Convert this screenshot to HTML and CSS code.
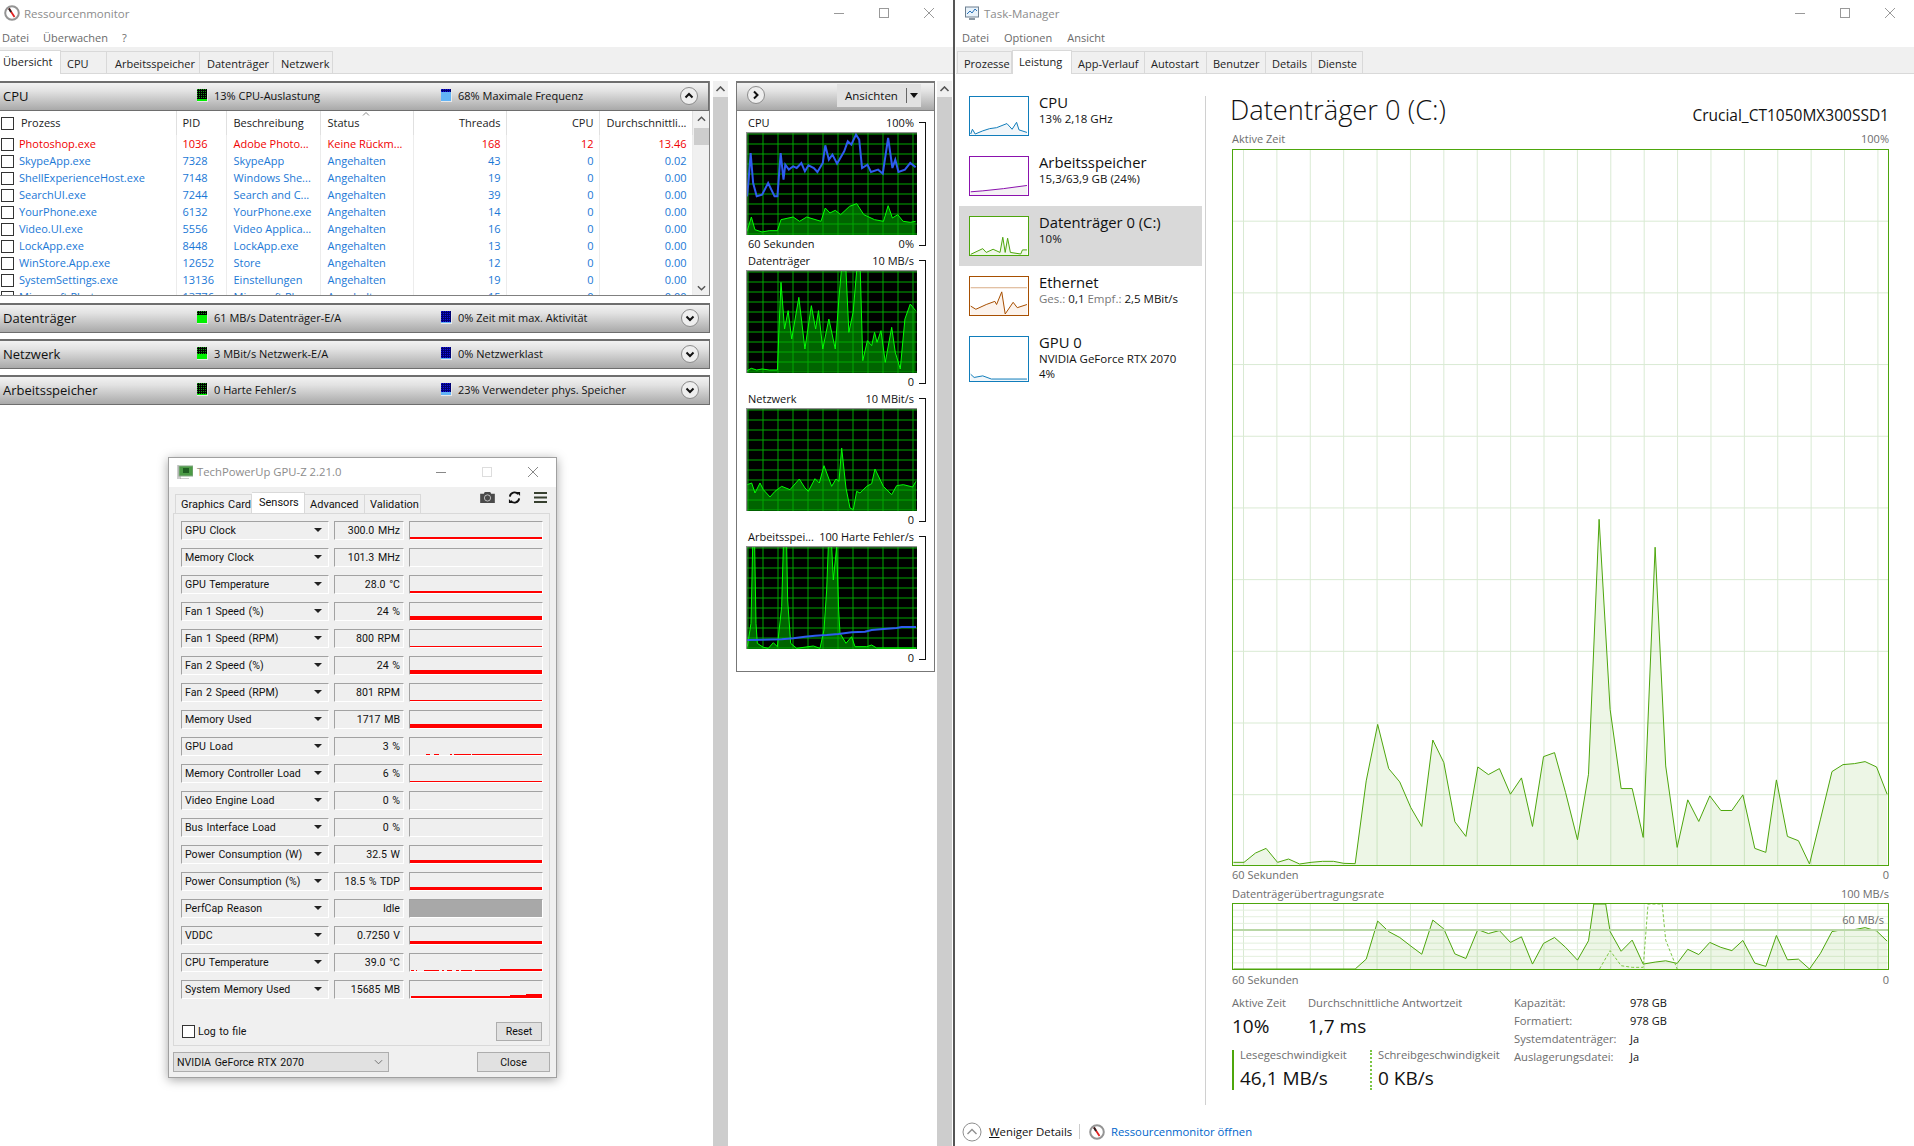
FILE: index.html
```html
<!DOCTYPE html>
<html lang="de">
<head>
    <meta charset="UTF-8">
    <title>Ressourcenmonitor und Task-Manager</title>
    <link rel="stylesheet" href="styles.css">
</head>
<body>

<!-- Ressourcenmonitor -->
<div class="resmon">
    <div class="title_bar">
        <svg class="title_icon" viewBox="0 0 16 16">
            <circle cx="8" cy="8" r="6.8" fill="#fff" stroke="#949494" stroke-width="2"/>
            <path d="M5 3.5 L10.5 12" stroke="#e02020" stroke-width="1.8"/>
            <path d="M5 3.5 L7 7" stroke="#222" stroke-width="1.8"/>
        </svg>
        <span class="title_text">Ressourcenmonitor</span>
        <div class="window_controls">
            <svg viewBox="0 0 12 12"><path d="M1 6.5 H11" stroke="#999"/></svg>
            <svg viewBox="0 0 12 12"><rect x="1.5" y="1.5" width="9" height="9" fill="none" stroke="#999"/></svg>
            <svg viewBox="0 0 12 12"><path d="M1 1 L11 11 M11 1 L1 11" stroke="#999"/></svg>
        </div>
    </div>
    <div class="menu_bar">
        <span>Datei</span><span>Überwachen</span><span>?</span>
    </div>
    <div class="tab_strip">
        <span class="tab tab_active rm_tab1">Übersicht</span>
        <span class="tab rm_tab2">CPU</span>
        <span class="tab rm_tab3">Arbeitsspeicher</span>
        <span class="tab rm_tab4">Datenträger</span>
        <span class="tab rm_tab5">Netzwerk</span>
    </div>

    <div class="rm_body">
        <div class="rm_sections">
            <div class="section">
                <div class="section_head">
                    <span class="section_name">CPU</span>
                    <span class="section_stat"><span class="meter meter_green"><i style="height:2px"></i></span>13% CPU-Auslastung</span>
                    <span class="section_stat stat_second"><span class="meter meter_blue"><i style="height:9px"></i></span>68% Maximale Frequenz</span>
                    <svg class="round_btn" viewBox="0 0 20 20"><circle cx="10" cy="10" r="8.5" fill="#eee" stroke="#8c8c8c"/><path d="M6.5 11.5 L10 8 L13.5 11.5" fill="none" stroke="#111" stroke-width="2"/></svg>
                </div>
                <div class="process_wrap">
                    <table class="process_table">
                        <colgroup>
                            <col class="c_name"><col class="c_pid"><col class="c_desc"><col class="c_num"><col class="c_num"><col class="c_num"><col class="c_num">
                        </colgroup>
                        <tr class="process_head">
                            <th><span class="check"></span>Prozess</th><th>PID</th><th class="wide_pad">Beschreibung</th>
                            <th class="sort_col wide_pad">Status<svg class="sort_arrow" viewBox="0 0 8 4"><path d="M1 3.5 L4 .5 L7 3.5" fill="none" stroke="#888"/></svg></th>
                            <th class="num">Threads</th><th class="num">CPU</th><th class="num">Durchschnittli...</th>
                        </tr>
                        <tr class="row_red"><td><span class="check"></span>Photoshop.exe</td><td>1036</td><td class="wide_pad">Adobe Photo...</td><td class="wide_pad">Keine Rückm...</td><td class="num">168</td><td class="num">12</td><td class="num">13.46</td></tr>
                        <tr><td><span class="check"></span>SkypeApp.exe</td><td>7328</td><td class="wide_pad">SkypeApp</td><td class="wide_pad">Angehalten</td><td class="num">43</td><td class="num">0</td><td class="num">0.02</td></tr>
                        <tr><td><span class="check"></span>ShellExperienceHost.exe</td><td>7148</td><td class="wide_pad">Windows She...</td><td class="wide_pad">Angehalten</td><td class="num">19</td><td class="num">0</td><td class="num">0.00</td></tr>
                        <tr><td><span class="check"></span>SearchUI.exe</td><td>7244</td><td class="wide_pad">Search and C...</td><td class="wide_pad">Angehalten</td><td class="num">39</td><td class="num">0</td><td class="num">0.00</td></tr>
                        <tr><td><span class="check"></span>YourPhone.exe</td><td>6132</td><td class="wide_pad">YourPhone.exe</td><td class="wide_pad">Angehalten</td><td class="num">14</td><td class="num">0</td><td class="num">0.00</td></tr>
                        <tr><td><span class="check"></span>Video.UI.exe</td><td>5556</td><td class="wide_pad">Video Applica...</td><td class="wide_pad">Angehalten</td><td class="num">16</td><td class="num">0</td><td class="num">0.00</td></tr>
                        <tr><td><span class="check"></span>LockApp.exe</td><td>8448</td><td class="wide_pad">LockApp.exe</td><td class="wide_pad">Angehalten</td><td class="num">13</td><td class="num">0</td><td class="num">0.00</td></tr>
                        <tr><td><span class="check"></span>WinStore.App.exe</td><td>12652</td><td class="wide_pad">Store</td><td class="wide_pad">Angehalten</td><td class="num">12</td><td class="num">0</td><td class="num">0.00</td></tr>
                        <tr><td><span class="check"></span>SystemSettings.exe</td><td>13136</td><td class="wide_pad">Einstellungen</td><td class="wide_pad">Angehalten</td><td class="num">19</td><td class="num">0</td><td class="num">0.00</td></tr>
                        <tr><td><span class="check"></span>Microsoft.Photos.exe</td><td>13776</td><td class="wide_pad">Microsoft Ph...</td><td class="wide_pad">Angehalten</td><td class="num">15</td><td class="num">0</td><td class="num">0.00</td></tr>
                    </table>
                    <div class="inner_scroll">
                        <svg viewBox="0 0 10 6"><path d="M1 5 L5 1 L9 5" fill="none" stroke="#555" stroke-width="1.6"/></svg>
                        <div class="inner_thumb"></div>
                        <svg class="scroll_down" viewBox="0 0 10 6"><path d="M1 1 L5 5 L9 1" fill="none" stroke="#555" stroke-width="1.6"/></svg>
                    </div>
                </div>
            </div>

            <div class="section_head section_closed">
                <span class="section_name">Datenträger</span>
                <span class="section_stat"><span class="meter meter_green"><i style="height:8px"></i></span>61 MB/s Datenträger-E/A</span>
                <span class="section_stat stat_second"><span class="meter meter_blue"><i style="height:1px"></i></span>0% Zeit mit max. Aktivität</span>
                <svg class="round_btn" viewBox="0 0 20 20"><circle cx="10" cy="10" r="8.5" fill="#eee" stroke="#8c8c8c"/><path d="M6.5 8.5 L10 12 L13.5 8.5" fill="none" stroke="#111" stroke-width="2"/></svg>
            </div>
            <div class="section_head section_closed">
                <span class="section_name">Netzwerk</span>
                <span class="section_stat"><span class="meter meter_green"><i style="height:5px"></i></span>3 MBit/s Netzwerk-E/A</span>
                <span class="section_stat stat_second"><span class="meter meter_blue"><i style="height:1px"></i></span>0% Netzwerklast</span>
                <svg class="round_btn" viewBox="0 0 20 20"><circle cx="10" cy="10" r="8.5" fill="#eee" stroke="#8c8c8c"/><path d="M6.5 8.5 L10 12 L13.5 8.5" fill="none" stroke="#111" stroke-width="2"/></svg>
            </div>
            <div class="section_head section_closed">
                <span class="section_name">Arbeitsspeicher</span>
                <span class="section_stat"><span class="meter meter_green"><i style="height:1px"></i></span>0 Harte Fehler/s</span>
                <span class="section_stat stat_second"><span class="meter meter_blue"><i style="height:3px"></i></span>23% Verwendeter phys. Speicher</span>
                <svg class="round_btn" viewBox="0 0 20 20"><circle cx="10" cy="10" r="8.5" fill="#eee" stroke="#8c8c8c"/><path d="M6.5 8.5 L10 12 L13.5 8.5" fill="none" stroke="#111" stroke-width="2"/></svg>
            </div>
        </div>

        <div class="outer_scroll scroll_one">
            <svg viewBox="0 0 10 6"><path d="M1 5 L5 1 L9 5" fill="none" stroke="#555" stroke-width="1.6"/></svg>
        </div>

        <div class="graph_panel">
            <div class="graph_head">
                <svg class="round_btn" viewBox="0 0 20 20"><circle cx="10" cy="10" r="8.5" fill="#eee" stroke="#8c8c8c"/><path d="M8 6.5 L11.5 10 L8 13.5" fill="none" stroke="#111" stroke-width="2"/></svg>
                <div class="views_btn"><span class="views_label">Ansichten</span><span class="views_arrow"></span></div>
            </div>
            <div class="graph_list">
                <div class="graph_block">
                    <div class="graph_labels"><span>CPU</span><span>100%</span></div>
                    <svg class="graph" viewBox="0 0 171 103">
                        <defs>
                            <pattern id="rm_grid" x="1.5" y="1.5" width="15" height="10" patternUnits="userSpaceOnUse">
                                <rect width="1" height="10" fill="#00a800"/><rect width="15" height="1" fill="#00a800"/>
                            </pattern>
                        </defs>
                        <rect width="171" height="103" fill="#000"/>
                        <g transform="scale(.3571 .3333) translate(-130 -397)">
                            <polygon class="fill_green" points="133,705 133,695 145,652 155,690 175,697 195,693 218,693 228,660 262,652 280,665 300,652 340,665 352,625 365,640 380,632 395,645 420,620 440,612 460,645 490,660 515,665 528,618 540,655 555,645 570,665 590,668 605,665 605,705"/>
                        </g>
                        <rect width="171" height="103" fill="url(#rm_grid)"/>
                        <g transform="scale(.3571 .3333) translate(-130 -397)">
                            <polyline class="line_green" points="133,695 145,652 155,690 175,697 195,693 218,693 228,660 262,652 280,665 300,652 340,665 352,625 365,640 380,632 395,645 420,620 440,612 460,645 490,660 515,665 528,618 540,655 555,645 570,665 590,668 605,665"/>
                            <polyline class="line_blue" points="133,590 137,545 143,460 150,550 160,590 175,585 192,550 210,590 218,590 227,460 235,540 240,495 250,510 262,500 272,505 285,490 295,515 305,497 320,505 330,517 345,490 352,437 362,480 372,465 385,492 405,455 415,425 425,435 438,405 447,420 455,505 470,495 480,517 500,510 513,522 528,415 540,505 548,480 557,517 575,510 590,490 605,503"/>
                        </g>
                        <path class="graph_edge" d="M.5 103 V.5 H171"/>
                    </svg>
                    <div class="graph_labels"><span>60 Sekunden</span><span>0%</span></div>
                </div>
                <div class="graph_block">
                    <div class="graph_labels"><span>Datenträger</span><span>10 MB/s</span></div>
                    <svg class="graph" viewBox="0 0 171 103">
                        <rect width="171" height="103" fill="#000"/>
                        <g transform="scale(.3571 .3333) translate(-130 -813)">
                            <polygon class="fill_green" points="133,1118 133,1115 145,1108 160,1113 175,1110 195,1113 218,1113 222,1000 228,850 238,990 248,935 258,1020 278,895 295,1050 313,920 325,990 333,935 345,1050 362,960 380,1050 390,900 397,815 410,815 418,1000 430,940 440,815 450,815 457,1085 470,1025 482,1040 490,1000 497,1030 508,995 520,1090 538,985 548,1060 562,1110 575,960 590,915 605,935 605,1118"/>
                        </g>
                        <rect width="171" height="103" fill="url(#rm_grid)"/>
                        <g transform="scale(.3571 .3333) translate(-130 -813)">
                            <polyline class="line_green" points="133,1115 145,1108 160,1113 175,1110 195,1113 218,1113 222,1000 228,850 238,990 248,935 258,1020 278,895 295,1050 313,920 325,990 333,935 345,1050 362,960 380,1050 390,900 397,815 410,815 418,1000 430,940 440,815 450,815 457,1085 470,1025 482,1040 490,1000 497,1030 508,995 520,1090 538,985 548,1060 562,1110 575,960 590,915 605,935"/>
                        </g>
                        <path class="graph_edge" d="M.5 103 V.5 H171"/>
                    </svg>
                    <div class="graph_labels graph_zero"><span>0</span></div>
                </div>
                <div class="graph_block">
                    <div class="graph_labels"><span>Netzwerk</span><span>10 MBit/s</span></div>
                    <svg class="graph" viewBox="0 0 171 103">
                        <rect width="171" height="103" fill="#000"/>
                        <g transform="scale(.3333) translate(-78 -85)">
                            <polygon class="fill_green" points="82,392 82,315 95,310 105,340 120,310 130,330 150,352 165,335 185,320 210,330 238,298 255,325 265,335 285,297 298,310 312,258 335,320 348,298 357,305 365,205 378,325 390,385 400,390 410,335 420,340 440,320 455,312 465,268 490,320 515,345 530,318 550,315 578,322 588,305 588,392"/>
                        </g>
                        <rect width="171" height="103" fill="url(#rm_grid)"/>
                        <g transform="scale(.3333) translate(-78 -85)">
                            <polyline class="line_green" points="82,315 95,310 105,340 120,310 130,330 150,352 165,335 185,320 210,330 238,298 255,325 265,335 285,297 298,310 312,258 335,320 348,298 357,305 365,205 378,325 390,385 400,390 410,335 420,340 440,320 455,312 465,268 490,320 515,345 530,318 550,315 578,322 588,305"/>
                        </g>
                        <path class="graph_edge" d="M.5 103 V.5 H171"/>
                    </svg>
                    <div class="graph_labels graph_zero"><span>0</span></div>
                </div>
                <div class="graph_block">
                    <div class="graph_labels"><span>Arbeitsspei...</span><span>100 Harte Fehler/s</span></div>
                    <svg class="graph" viewBox="0 0 171 103">
                        <rect width="171" height="103" fill="#000"/>
                        <g transform="scale(.3333) translate(-78 -498)">
                            <polygon class="fill_green" points="82,806 82,800 93,730 98,500 104,500 108,730 112,790 130,802 145,805 160,788 172,800 185,680 190,500 200,500 203,660 212,790 230,805 280,798 300,805 312,750 320,630 325,500 335,500 340,600 350,500 356,690 360,760 378,790 395,770 405,800 440,800 455,795 470,804 588,804 588,806"/>
                        </g>
                        <rect width="171" height="103" fill="url(#rm_grid)"/>
                        <g transform="scale(.3333) translate(-78 -498)">
                            <polyline class="line_green" points="82,800 93,730 98,500 104,500 108,730 112,790 130,802 145,805 160,788 172,800 185,680 190,500 200,500 203,660 212,790 230,805 280,798 300,805 312,750 320,630 325,500 335,500 340,600 350,500 356,690 360,760 378,790 395,770 405,800 440,800 455,795 470,804 588,804"/>
                            <polyline class="line_blue" points="82,780 185,778 220,775 255,770 285,767 320,765 355,762 395,757 435,755 455,750 490,747 530,744 545,741 588,741"/>
                        </g>
                        <path class="graph_edge" d="M.5 103 V.5 H171"/>
                    </svg>
                    <div class="graph_labels graph_zero"><span>0</span></div>
                </div>
            </div>
        </div>

        <div class="outer_scroll scroll_two">
            <svg viewBox="0 0 10 6"><path d="M1 5 L5 1 L9 5" fill="none" stroke="#555" stroke-width="1.6"/></svg>
        </div>
    </div>
</div>

<div class="window_gap"></div>

<!-- Task-Manager -->
<div class="taskmgr">
    <div class="title_bar">
        <svg class="title_icon tm_icon" viewBox="0 0 16 16">
            <rect x="1.5" y="2" width="13" height="10" fill="#e8f2fa" stroke="#6d7f8f"/>
            <path d="M3 9 L6 6 L8 8 L11 4 L13 6" fill="none" stroke="#2a72b8"/>
            <rect x="5" y="13" width="6" height="2" fill="#8b98a3"/>
        </svg>
        <span class="title_text">Task-Manager</span>
        <div class="window_controls">
            <svg viewBox="0 0 12 12"><path d="M1 6.5 H11" stroke="#999"/></svg>
            <svg viewBox="0 0 12 12"><rect x="1.5" y="1.5" width="9" height="9" fill="none" stroke="#999"/></svg>
            <svg viewBox="0 0 12 12"><path d="M1 1 L11 11 M11 1 L1 11" stroke="#999"/></svg>
        </div>
    </div>
    <div class="menu_bar tm_menu">
        <span>Datei</span><span>Optionen</span><span>Ansicht</span>
    </div>
    <div class="tab_strip tm_strip">
        <span class="tab tm_tab1">Prozesse</span>
        <span class="tab tab_active tm_tab2">Leistung</span>
        <span class="tab tm_tab3">App-Verlauf</span>
        <span class="tab tm_tab4">Autostart</span>
        <span class="tab tm_tab5">Benutzer</span>
        <span class="tab tm_tab6">Details</span>
        <span class="tab tm_tab7">Dienste</span>
    </div>

    <div class="tm_body">
        <div class="perf_list">
            <div class="perf_item">
                <svg class="thumb thumb_cpu" viewBox="0 0 60 40" preserveAspectRatio="none">
                    <g transform="scale(.357 .333) translate(-753 -288)">
                        <polygon fill="#f1f6fa" points="755,408 755,405 760,390 768,405 790,395 810,388 830,385 860,372 875,390 888,368 895,392 918,400 918,408"/>
                        <polyline class="thumb_line" points="755,405 760,390 768,405 790,395 810,388 830,385 860,372 875,390 888,368 895,392 918,400"/>
                    </g>
                </svg>
                <div class="perf_text"><div class="perf_name">CPU</div><div class="perf_sub">13% 2,18 GHz</div></div>
            </div>
            <div class="perf_item">
                <svg class="thumb thumb_mem" viewBox="0 0 60 40" preserveAspectRatio="none">
                    <g transform="scale(.357 .333) translate(-753 -468)">
                        <polygon fill="#f4f2f4" points="755,588 755,578 790,575 850,568 918,558 918,588"/>
                        <polyline class="thumb_line" points="755,578 790,575 850,568 918,558"/>
                    </g>
                </svg>
                <div class="perf_text"><div class="perf_name">Arbeitsspeicher</div><div class="perf_sub">15,3/63,9 GB (24%)</div></div>
            </div>
            <div class="perf_item perf_selected">
                <svg class="thumb thumb_disk" viewBox="0 0 60 40" preserveAspectRatio="none">
                    <rect width="60" height="40" fill="#fff"/>
                    <g transform="scale(.357 .333) translate(-753 -648)">
                        <polygon fill="#eff7e9" points="755,768 755,766 790,748 800,760 820,750 840,760 848,712 855,760 862,715 870,760 900,765 905,752 918,752 918,768"/>
                        <polyline class="thumb_line" points="755,766 790,748 800,760 820,750 840,760 848,712 855,760 862,715 870,760 900,765 905,752 918,752"/>
                    </g>
                </svg>
                <div class="perf_text"><div class="perf_name">Datenträger 0 (C:)</div><div class="perf_sub">10%</div></div>
            </div>
            <div class="perf_item">
                <svg class="thumb thumb_eth" viewBox="0 0 60 40" preserveAspectRatio="none">
                    <g transform="scale(.357 .333) translate(-753 -828)">
                        <polygon fill="#fcf3ec" points="755,948 755,920 770,930 800,915 825,905 830,915 845,875 855,945 878,908 890,925 918,915 918,948"/>
                        <path d="M755 862 H918" stroke="#d9ad86" vector-effect="non-scaling-stroke" fill="none"/>
                        <polyline class="thumb_line" points="755,920 770,930 800,915 825,905 830,915 845,875 855,945 878,908 890,925 918,915"/>
                    </g>
                </svg>
                <div class="perf_text"><div class="perf_name">Ethernet</div><div class="perf_sub"><span class="perf_dim">Ges.:</span> 0,1 <span class="perf_dim">Empf.:</span> 2,5 MBit/s</div></div>
            </div>
            <div class="perf_item">
                <svg class="thumb thumb_cpu thumb_tall" viewBox="0 0 60 46" preserveAspectRatio="none">
                    <g transform="scale(.357 .333) translate(-753 -1008)">
                        <polygon fill="#f1f6fa" points="755,1146 755,1125 765,1135 790,1130 815,1140 918,1140 918,1146"/>
                        <polyline class="thumb_line" points="755,1125 765,1135 790,1130 815,1140 918,1140"/>
                    </g>
                </svg>
                <div class="perf_text"><div class="perf_name">GPU 0</div><div class="perf_sub">NVIDIA GeForce RTX 2070</div><div class="perf_sub perf_sub2">4%</div></div>
            </div>
        </div>
        <div class="side_rule"></div>
        <div class="perf_main">
            <div class="perf_title_row">
                <span class="perf_title">Datenträger 0 (C:)</span>
                <span class="perf_model">Crucial_CT1050MX300SSD1</span>
            </div>
            <div class="chart_label chart_label_top"><span>Aktive Zeit</span><span>100%</span></div>
            <div class="chart chart_big">
                <svg viewBox="27 -993 1485 2151" preserveAspectRatio="none">
                    <polygon class="chart_fill" points="28,1158 28,1150 52,1150 78,1122 102,1108 128,1150 153,1140 178,1155 204,1150 230,1147 255,1147 278,1153 304,1154 329,905 355,735 380,868 405,908 430,985 455,1042 480,782 505,850 530,1028 555,1072 582,863 606,886 631,868 656,945 681,896 706,1042 731,832 756,820 781,940 808,1082 833,885 857,118 882,690 907,928 932,928 957,1075 984,202 1008,860 1034,1105 1058,962 1083,1027 1108,950 1133,994 1158,994 1183,947 1210,1108 1235,1120 1259,902 1284,1072 1309,1085 1334,1155 1359,1020 1385,877 1410,856 1436,853 1460,847 1486,863 1510,945 1510,1158"/>
                    <polyline class="chart_line" points="28,1150 52,1150 78,1122 102,1108 128,1150 153,1140 178,1155 204,1150 230,1147 255,1147 278,1153 304,1154 329,905 355,735 380,868 405,908 430,985 455,1042 480,782 505,850 530,1028 555,1072 582,863 606,886 631,868 656,945 681,896 706,1042 731,832 756,820 781,940 808,1082 833,885 857,118 882,690 907,928 932,928 957,1075 984,202 1008,860 1034,1105 1058,962 1083,1027 1108,950 1133,994 1158,994 1183,947 1210,1108 1235,1120 1259,902 1284,1072 1309,1085 1334,1155 1359,1020 1385,877 1410,856 1436,853 1460,847 1486,863 1510,945"/>
                </svg>
            </div>
            <div class="chart_label chart_label_a"><span>60 Sekunden</span><span>0</span></div>
            <div class="chart_label chart_label_b"><span>Datenträgerübertragungsrate</span><span>100 MB/s</span></div>
            <div class="chart chart_small">
                <svg viewBox="27 130 1485 198" preserveAspectRatio="none">
                    <polygon class="chart_fill" points="304,328 329,298 355,182 380,214 405,232 430,258 455,283 480,179 505,206 530,282 555,296 582,208 606,220 631,211 656,247 681,230 706,313 731,250 756,232 781,262 808,301 833,242 845,130 872,130 882,214 907,274 932,240 957,313 984,307 1008,303 1034,311 1058,268 1083,284 1108,247 1133,262 1158,272 1183,241 1210,310 1235,320 1259,226 1284,300 1309,298 1334,328 1359,280 1385,214 1410,208 1436,208 1460,202 1486,212 1510,243 1510,328"/>
                    <polyline class="chart_line" points="28,328 304,328 329,298 355,182 380,214 405,232 430,258 455,283 480,179 505,206 530,282 555,296 582,208 606,220 631,211 656,247 681,230 706,313 731,250 756,232 781,262 808,301 833,242 845,130 872,130 882,214 907,274 932,240 957,313 984,307 1008,303 1034,311 1058,268 1083,284 1108,247 1133,262 1158,272 1183,241 1210,310 1235,320 1259,226 1284,300 1309,298 1334,328 1359,280 1385,214 1410,208 1436,208 1460,202 1486,212 1510,243"/>
                    <polyline class="chart_dash" points="858,328 882,272 907,318 932,323 957,323 968,130 1000,130 1008,240 1034,328"/>
                </svg>
                <span class="chart_mark">60 MB/s</span>
            </div>
            <div class="chart_label chart_label_c"><span>60 Sekunden</span><span>0</span></div>

            <div class="stats">
                <div class="stats_left">
                    <div class="stats_top">
                        <div class="stat_cell stat_active"><div class="stat_label">Aktive Zeit</div><div class="stat_value">10%</div></div>
                        <div class="stat_cell"><div class="stat_label">Durchschnittliche Antwortzeit</div><div class="stat_value">1,7 ms</div></div>
                    </div>
                    <div class="stats_bottom">
                        <div class="stat_cell stat_read"><div class="stat_label">Lesegeschwindigkeit</div><div class="stat_value">46,1 MB/s</div></div>
                        <div class="stat_cell stat_write"><div class="stat_label">Schreibgeschwindigkeit</div><div class="stat_value">0 KB/s</div></div>
                    </div>
                </div>
                <div class="stats_right">
                    <span class="stat_label">Kapazität:</span><span>978 GB</span>
                    <span class="stat_label">Formatiert:</span><span>978 GB</span>
                    <span class="stat_label">Systemdatenträger:</span><span>Ja</span>
                    <span class="stat_label">Auslagerungsdatei:</span><span>Ja</span>
                </div>
            </div>
        </div>
    </div>

    <div class="tm_footer">
        <svg class="footer_circle" viewBox="0 0 20 20"><circle cx="10" cy="10" r="9" fill="#fff" stroke="#8f8f8f"/><path d="M5.5 12 L10 7.5 L14.5 12" fill="none" stroke="#8f8f8f" stroke-width="1.4"/></svg>
        <span class="footer_details"><u>W</u>eniger Details</span>
        <span class="footer_rule"></span>
        <svg class="footer_icon" viewBox="0 0 16 16">
            <circle cx="8" cy="8" r="6.8" fill="#fff" stroke="#949494" stroke-width="2"/>
            <path d="M5 3.5 L10.5 12" stroke="#e02020" stroke-width="1.8"/>
            <path d="M5 3.5 L7 7" stroke="#222" stroke-width="1.8"/>
        </svg>
        <span class="footer_link">Ressourcenmonitor öffnen</span>
    </div>
</div>

<!-- GPU-Z liegt über dem Ressourcenmonitor -->
<div class="gpuz">
    <div class="gpuz_title">
        <svg class="gpuz_icon" viewBox="0 0 16 14">
            <rect x="2" y="1" width="14" height="10" fill="#4b9a45" stroke="#86a886"/>
            <rect x="6" y="3" width="6" height="5" fill="#1f5e22"/>
            <path d="M1 0 V14 M3 11 V14 H12" stroke="#9a9a9a" fill="none"/>
        </svg>
        <span class="title_text">TechPowerUp GPU-Z 2.21.0</span>
        <div class="window_controls gpuz_controls">
            <svg viewBox="0 0 12 12"><path d="M1 6.5 H11" stroke="#888"/></svg>
            <svg viewBox="0 0 12 12"><rect x="1.5" y="1.5" width="9" height="9" fill="none" stroke="#ddd"/></svg>
            <svg viewBox="0 0 12 12"><path d="M1 1 L11 11 M11 1 L1 11" stroke="#888"/></svg>
        </div>
    </div>
    <div class="gpuz_tabs">
        <span class="gtab gtab1">Graphics Card</span>
        <span class="gtab gtab_active gtab2">Sensors</span>
        <span class="gtab gtab3">Advanced</span>
        <span class="gtab gtab4">Validation</span>
        <div class="gpuz_tools">
            <svg class="tool_cam" viewBox="0 0 16 12"><path d="M0 2 H4 L5 0 H11 L12 2 H16 V12 H0 Z" fill="#4a4a4a"/><circle cx="8" cy="6.5" r="3.4" fill="#4a4a4a" stroke="#c8c8c8"/></svg>
            <svg class="tool_ref" viewBox="0 0 14 14"><path d="M2 6 A5 5 0 0 1 11 3.5 M12 8 A5 5 0 0 1 3 10.5" fill="none" stroke="#111" stroke-width="2"/><path d="M9 1 L13 1 L13 5.5 Z M5 13 L1 13 L1 8.5 Z" fill="#111"/></svg>
            <svg class="tool_menu" viewBox="0 0 13 11"><path d="M0 1 H13 M0 5.5 H13 M0 10 H13" stroke="#37402f" stroke-width="2"/></svg>
        </div>
    </div>
    <div class="gpuz_panel">
        <div class="sensor"><div class="sensor_name">GPU Clock<i></i></div><div class="sensor_value">300.0 MHz</div><div class="sensor_graph"><b style="height:2px"></b></div></div>
        <div class="sensor"><div class="sensor_name">Memory Clock<i></i></div><div class="sensor_value">101.3 MHz</div><div class="sensor_graph"></div></div>
        <div class="sensor"><div class="sensor_name">GPU Temperature<i></i></div><div class="sensor_value">28.0 °C</div><div class="sensor_graph"><b style="height:2px"></b></div></div>
        <div class="sensor"><div class="sensor_name">Fan 1 Speed (%)<i></i></div><div class="sensor_value">24 %</div><div class="sensor_graph"><b style="height:4px"></b></div></div>
        <div class="sensor"><div class="sensor_name">Fan 1 Speed (RPM)<i></i></div><div class="sensor_value">800 RPM</div><div class="sensor_graph"><b style="height:1px"></b></div></div>
        <div class="sensor"><div class="sensor_name">Fan 2 Speed (%)<i></i></div><div class="sensor_value">24 %</div><div class="sensor_graph"><b style="height:4px"></b></div></div>
        <div class="sensor"><div class="sensor_name">Fan 2 Speed (RPM)<i></i></div><div class="sensor_value">801 RPM</div><div class="sensor_graph"><b style="height:1px"></b></div></div>
        <div class="sensor"><div class="sensor_name">Memory Used<i></i></div><div class="sensor_value">1717 MB</div><div class="sensor_graph"><b style="height:4px"></b></div></div>
        <div class="sensor"><div class="sensor_name">GPU Load<i></i></div><div class="sensor_value">3 %</div><div class="sensor_graph"><svg class="sensor_svg" viewBox="0 0 132 17"><path d="M16 16.5 H20 M24 16.5 H29 M40 16.5 H42 M44 16.5 H61 M62 16.5 H132" stroke="#f00"/></svg></div></div>
        <div class="sensor"><div class="sensor_name">Memory Controller Load<i></i></div><div class="sensor_value">6 %</div><div class="sensor_graph"><b style="height:1px"></b></div></div>
        <div class="sensor"><div class="sensor_name">Video Engine Load<i></i></div><div class="sensor_value">0 %</div><div class="sensor_graph"></div></div>
        <div class="sensor"><div class="sensor_name">Bus Interface Load<i></i></div><div class="sensor_value">0 %</div><div class="sensor_graph"></div></div>
        <div class="sensor"><div class="sensor_name">Power Consumption (W)<i></i></div><div class="sensor_value">32.5 W</div><div class="sensor_graph"><b style="height:3px"></b></div></div>
        <div class="sensor"><div class="sensor_name">Power Consumption (%)<i></i></div><div class="sensor_value">18.5 % TDP</div><div class="sensor_graph"><b style="height:3px"></b></div></div>
        <div class="sensor"><div class="sensor_name">PerfCap Reason<i></i></div><div class="sensor_value">Idle</div><div class="sensor_graph sensor_idle"></div></div>
        <div class="sensor"><div class="sensor_name">VDDC<i></i></div><div class="sensor_value">0.7250 V</div><div class="sensor_graph"><b style="height:3px"></b></div></div>
        <div class="sensor"><div class="sensor_name">CPU Temperature<i></i></div><div class="sensor_value">39.0 °C</div><div class="sensor_graph"><svg class="sensor_svg" viewBox="0 0 132 17"><path d="M1 16.5 H4 M6 16.5 H7 M14 16.5 H29 M32 16.5 H34 M37 16.5 H42 M46 16.5 H49 M51 16.5 H62 M65 16.5 H132 M90 15.5 H132" stroke="#f00"/></svg></div></div>
        <div class="sensor"><div class="sensor_name">System Memory Used<i></i></div><div class="sensor_value">15685 MB</div><div class="sensor_graph"><svg class="sensor_svg" viewBox="0 0 132 17"><path d="M1 15 H100 V14 H116 V13 H132 V17 H1 Z" fill="#f00"/></svg></div></div>
        <div class="gpuz_log">
            <span class="check log_check"></span><span>Log to file</span>
            <span class="gbtn gbtn_reset">Reset</span>
        </div>
    </div>
    <div class="gpuz_bottom">
        <div class="gpuz_select">NVIDIA GeForce RTX 2070<svg viewBox="0 0 10 6"><path d="M1 1 L5 5 L9 1" fill="none" stroke="#666"/></svg></div>
        <span class="gbtn gbtn_close">Close</span>
    </div>
</div>

</body>
</html>
```

FILE: styles.css
```css
* {
  box-sizing: border-box;
}

html, body {
  margin: 0;
  padding: 0;
}

body {
  width: 1914px;
  height: 1146px;
  overflow: hidden;
  display: flex;
  position: relative;
  background: #fff;
  font-family: "Open Sans", "Noto Sans", sans-serif;
  font-size: 11px;
  color: #111;
}

/* shared window chrome */
.resmon {
  width: 953px;
  height: 1146px;
  display: flex;
  flex-direction: column;
}

.window_gap {
  width: 2px;
  background: #555;
}

.taskmgr {
  width: 958px;
  margin-left: 1px;
  height: 1146px;
  display: flex;
  flex-direction: column;
}

.title_bar {
  height: 28px;
  display: flex;
  align-items: center;
  padding: 0 0 2px 4px;
}

.title_icon {
  width: 16px;
  height: 16px;
  margin-right: 4px;
}

.tm_icon {
  margin-left: 4px;
}

.title_text {
  color: #8c8c8c;
  font-size: 11.5px;
}

.window_controls {
  margin-left: auto;
  display: flex;
  gap: 33px;
  padding-right: 18px;
}

.window_controls svg {
  width: 12px;
  height: 12px;
}

.menu_bar {
  height: 19px;
  display: flex;
  align-items: center;
  gap: 14px;
  padding-left: 2px;
  color: #6a6a6a;
}

.tm_menu {
  padding-left: 6px;
  gap: 15px;
}

.tab_strip {
  height: 27px;
  background: #f0f0f0;
  border-bottom: 1px solid #d9d9d9;
  display: flex;
  align-items: flex-end;
}

.tm_strip {
  padding-left: 1px;
}

.tab {
  height: 22px;
  background: #f0f0f0;
  border: 1px solid #d9d9d9;
  border-bottom: none;
  border-left: none;
  padding: 1px 0 0 6px;
  display: flex;
  align-items: center;
  color: #222;
  white-space: nowrap;
}

.tab_active {
  height: 24px;
  background: #fff;
  border-left: 1px solid #d9d9d9;
  margin-bottom: -1px;
  padding-top: 0;
  padding-bottom: 3px;
}

.rm_tab1 { width: 61px; padding-left: 3px; border-left: none; }
.rm_tab2 { width: 46px; }
.rm_tab3 { width: 93px; padding-left: 8px; }
.rm_tab4 { width: 74px; padding-left: 7px; }
.rm_tab5 { width: 59px; padding-left: 7px; }
.tm_tab1 { width: 55px; border-left: 1px solid #d9d9d9; }
.tm_tab2 { width: 60px; }
.tm_tab3 { width: 73px; }
.tm_tab4 { width: 62px; }
.tm_tab5 { width: 59px; }
.tm_tab6 { width: 46px; }
.tm_tab7 { width: 51px; }

/* Ressourcenmonitor body */
.rm_body {
  flex: 1;
  display: flex;
  padding-top: 7px;
}

.rm_sections {
  width: 710px;
  display: flex;
  flex-direction: column;
  gap: 6px;
}

.section {
  height: 215px;
  margin-bottom: 1px;
  border-bottom: 1px solid #808080;
  border-right: 1px solid #808080;
}

.section_head {
  height: 30px;
  flex: none;
  display: flex;
  align-items: center;
  position: relative;
  padding-bottom: 2px;
  border: 1px solid #6e6e6e;
  border-left: none;
  border-top-width: 2px;
  background: linear-gradient(#f2f2f2, #e2e2e2 30%, #a9a9a9);
}

.section_name {
  width: 197px;
  flex: none;
  padding-left: 3px;
  font-size: 13px;
}

.section_stat {
  display: flex;
  align-items: center;
  width: 244px;
  flex: none;
  white-space: nowrap;
}

.stat_second {
  width: 225px;
}

.meter {
  width: 11px;
  height: 13px;
  margin-right: 6px;
  border: 1px solid #e8e8e8;
  border-top: none;
  border-left: none;
  display: flex;
  align-items: flex-end;
  background-size: 2px 2px;
}

.meter_green {
  background-color: #0e9a0e;
  background-image:
    linear-gradient(90deg, transparent 50%, #000 50%),
    linear-gradient(transparent 50%, #000 50%);
}

.meter_blue {
  background-color: #1212e0;
  background-image:
    linear-gradient(90deg, transparent 50%, #000070 50%),
    linear-gradient(transparent 50%, #000070 50%);
}

.meter i {
  display: block;
  width: 100%;
}

.meter_green i {
  background: #00f000;
}

.meter_blue i {
  background: #62b4f6;
}

.round_btn {
  width: 20px;
  height: 20px;
  flex: none;
}

.section_head .round_btn {
  margin-left: auto;
  margin-right: 9px;
}

.process_wrap {
  height: 184px;
  display: flex;
  overflow: hidden;
}

.process_table {
  width: 692px;
  flex: none;
  table-layout: fixed;
  border-collapse: collapse;
  height: 184px;
}

.c_name { width: 176px; }
.c_pid { width: 50px; }
.c_desc { width: 94px; }
.c_num { width: 93px; }

.process_table tr {
  height: 17px;
}

.process_table .process_head {
  height: 24px;
}

.process_table th,
.process_table td {
  padding: 0 6px;
  font-weight: normal;
  text-align: left;
  white-space: nowrap;
  overflow: hidden;
  border-right: 1px solid #ececec;
  color: #1a78d6;
  vertical-align: middle;
}

.process_table th {
  color: #222;
  border-right: 1px solid #e0e0e0;
  padding-bottom: 2px;
  position: relative;
}

.process_table td:first-child,
.process_table th:first-child {
  padding-left: 1px;
}

.process_table .wide_pad {
  padding-left: 7px;
}

.process_table .num {
  text-align: right;
  padding-right: 5px;
}

.process_table .row_red td {
  color: #f00000;
}

.check {
  display: inline-block;
  width: 13px;
  height: 13px;
  border: 1px solid #333;
  background: #fff;
  margin-right: 5px;
  vertical-align: -3px;
}

.process_head .check {
  margin-right: 7px;
}

.sort_arrow {
  position: absolute;
  left: 41px;
  top: 1px;
  width: 8px;
  height: 4px;
}

.inner_scroll {
  width: 17px;
  flex: none;
  background: #f0f0f0;
  display: flex;
  flex-direction: column;
  align-items: center;
  padding-top: 5px;
}

.inner_scroll svg {
  width: 9px;
  height: 6px;
  flex: none;
}

.inner_thumb {
  width: 15px;
  height: 17px;
  margin-top: 6px;
  flex: none;
  background: #cdcdcd;
}

.inner_scroll .scroll_down {
  margin-top: 140px;
}

.outer_scroll {
  width: 15px;
  background: #cdcdcd;
}

.outer_scroll svg {
  display: block;
  width: 100%;
  height: 16px;
  padding: 5px 2px;
  background: #f0f0f0;
}

.scroll_one {
  margin-left: 3px;
}

.scroll_two {
  margin-left: 2px;
}

/* Graph panel */
.graph_panel {
  width: 199px;
  height: 591px;
  margin-left: 8px;
  border: 1px solid #777;
  border-top-width: 2px;
}

.graph_head {
  height: 28px;
  display: flex;
  align-items: center;
  padding: 0 0 3px 9px;
  background: linear-gradient(#f2f2f2, #e2e2e2 30%, #a9a9a9);
  border-bottom: 1px solid #808080;
}

.views_btn {
  margin-left: auto;
  margin-right: 13px;
  width: 84px;
  height: 23px;
  background: #e1e1e1;
  display: flex;
  align-items: center;
}

.views_label {
  width: 70px;
  text-align: center;
  border-right: 1px solid #666;
  font-size: 11.5px;
}

.views_arrow {
  width: 0;
  height: 0;
  margin-left: 3px;
  border-left: 4px solid transparent;
  border-right: 4px solid transparent;
  border-top: 5px solid #111;
}

.graph_list {
  padding: 5px 0 0 9px;
}

.graph_block {
  width: 171px;
  height: 134px;
  position: relative;
  margin-bottom: 4px;
}

.graph_block::after {
  content: "";
  position: absolute;
  left: 173px;
  top: 6px;
  width: 6px;
  bottom: 4px;
  border: 1px solid #111;
  border-left: none;
}

.graph_labels {
  display: flex;
  justify-content: space-between;
  height: 15px;
  line-height: 15px;
  padding: 0 3px 0 2px;
  white-space: nowrap;
}

.graph_labels:first-child {
  height: 16px;
  line-height: 13px;
}

.graph_zero {
  justify-content: flex-end;
}

.graph {
  display: block;
  width: 171px;
  height: 103px;
  margin-bottom: 1px;
}

.fill_green {
  fill: #006400;
}

.line_green,
.line_blue {
  fill: none;
  vector-effect: non-scaling-stroke;
}

.line_green {
  stroke: #00ff00;
  stroke-width: 1;
}

.line_blue {
  stroke: #2e5cf0;
  stroke-width: 2;
}

.graph_edge {
  fill: none;
  stroke: #909090;
  stroke-width: 1.5;
}

/* Task-Manager body */
.tm_body {
  flex: 1;
  display: flex;
}

.perf_list {
  width: 246px;
  padding: 12px 0 0 3px;
  flex: none;
}

.perf_item {
  height: 60px;
  display: flex;
  padding: 10px 0 0 10px;
}

.perf_selected {
  background: #d9d9d9;
}

.thumb {
  width: 60px;
  height: 40px;
  flex: none;
  border: 1px solid;
  background: #fff;
  margin-right: 10px;
}

.thumb_tall {
  height: 46px;
}

.thumb_line {
  fill: none;
  vector-effect: non-scaling-stroke;
  stroke-width: 1;
  stroke: currentColor;
}

.thumb_cpu { color: #117dbb; }
.thumb_mem { color: #8b12ae; }
.thumb_disk { color: #4da60c; }
.thumb_eth { color: #a74f01; }

.perf_text {
  margin-top: -1px;
}

.perf_name {
  font-size: 14.8px;
  line-height: 14px;
  white-space: nowrap;
}

.perf_sub {
  margin-top: 3px;
  font-size: 11.5px;
  line-height: 14px;
  white-space: nowrap;
}

.perf_sub2 {
  margin-top: 1px;
}

.perf_dim {
  color: #777;
}

.side_rule {
  width: 1px;
  height: 1009px;
  margin: 22px 0 0 3px;
  background: #d0d0d0;
  flex: none;
}

.perf_main {
  width: 657px;
  margin-left: 26px;
  flex: none;
  padding-top: 20px;
}

.perf_title_row {
  display: flex;
  justify-content: space-between;
  align-items: flex-end;
  height: 32px;
}

.perf_title {
  font-size: 27.3px;
  font-weight: 300;
  line-height: 32px;
  margin-left: -2px;
  white-space: nowrap;
}

.perf_model {
  font-size: 15.5px;
  line-height: 22px;
}

.chart_label {
  display: flex;
  justify-content: space-between;
  height: 14px;
  line-height: 14px;
  color: #6d6d6d;
}

.chart_label_top {
  margin-top: 6px;
  height: 17px;
}

.chart_label_a {
  margin-top: 2px;
}

.chart_label_b {
  margin-top: 5px;
  height: 16px;
}

.chart_label_c {
  margin-top: 3px;
}

.chart {
  width: 657px;
  border: 1px solid #4da60c;
  position: relative;
  background-color: #fff;
}

.chart svg {
  display: block;
  width: 100%;
  height: 100%;
}

.chart_big {
  height: 717px;
  background-image:
    linear-gradient(#d9ead3 0 1px, transparent 1px),
    linear-gradient(90deg, #d9ead3 0 1px, transparent 1px);
  background-size: 100% 71.7px, 33.4px 100%;
  background-position: 0 70.7px, 10px 0;
}

.chart_small {
  height: 67px;
  background-image:
    linear-gradient(#e2efdc 0 1px, transparent 1px),
    linear-gradient(90deg, #d9ead3 0 1px, transparent 1px);
  background-size: 100% 6.6px, 33.4px 100%;
  background-position: 0 5.7px, 10px 0;
}

.chart_small::before {
  content: "";
  position: absolute;
  left: 0;
  right: 0;
  top: 25px;
  height: 2px;
  background: #b9d7a6;
}

.chart_fill {
  fill: #4da60c;
  fill-opacity: .1;
}

.chart_line,
.chart_dash {
  fill: none;
  stroke: #4da60c;
  stroke-width: 1;
  vector-effect: non-scaling-stroke;
}

.chart_dash {
  stroke: #7cc644;
  stroke-dasharray: 3 2;
}

.chart_mark {
  position: absolute;
  right: 4px;
  top: 8px;
  color: #6d6d6d;
  font-size: 11px;
}

.stats {
  display: flex;
  margin-top: 9px;
}

.stats_left {
  width: 282px;
  flex: none;
}

.stats_top {
  display: flex;
  height: 54px;
}

.stats_bottom {
  display: flex;
}

.stats_bottom .stat_label {
  margin-top: -2px;
}

.stat_active {
  width: 76px;
}

.stat_label {
  color: #6d6d6d;
  font-size: 11.2px;
  line-height: 14px;
  white-space: nowrap;
}

.stat_value {
  font-size: 19px;
  line-height: 28px;
  margin-top: 2px;
  white-space: nowrap;
}

.stat_read {
  width: 138px;
  height: 40px;
  padding-left: 6px;
  border-left: 2px solid #4da60c;
}

.stat_write {
  height: 40px;
  padding-left: 6px;
  border-left: 2px dotted #7cc644;
}

.stats_right {
  display: grid;
  grid-template-columns: 116px auto;
  grid-auto-rows: 18px;
  line-height: 14px;
}

.tm_footer {
  height: 32px;
  display: flex;
  align-items: center;
  padding: 3px 0 0 6px;
}

.footer_circle {
  width: 20px;
  height: 20px;
  margin-right: 7px;
}

.footer_details {
  width: 90px;
  font-size: 11.4px;
}

.footer_rule {
  width: 1px;
  height: 15px;
  background: #ccc;
}

.footer_icon {
  width: 16px;
  height: 16px;
  margin: 0 6px 0 9px;
}

.footer_link {
  color: #0066cc;
  font-size: 11.3px;
}

/* GPU-Z window */
.gpuz {
  position: absolute;
  left: 168px;
  top: 457px;
  width: 389px;
  height: 621px;
  background: #f0f0f0;
  border: 1px solid #a0a0a0;
  box-shadow: 0 2px 10px rgba(0, 0, 0, .35);
  font-family: Roboto, "Open Sans", sans-serif;
  font-size: 10.6px;
  word-spacing: 1px;
  display: flex;
  flex-direction: column;
}

.gpuz_title {
  height: 29px;
  flex: none;
  background: #fff;
  display: flex;
  align-items: center;
  padding: 0 0 2px 8px;
}

.gpuz_title .title_text {
  font-family: "Open Sans", sans-serif;
  font-size: 11.3px;
  word-spacing: 0;
}

.gpuz_icon {
  width: 16px;
  height: 14px;
  margin-right: 4px;
}

.gpuz_controls {
  gap: 34px;
  padding-right: 17px;
}

.gpuz_tabs {
  height: 26px;
  flex: none;
  display: flex;
  align-items: flex-end;
  padding-left: 6px;
  position: relative;
  font-size: 11px;
}

.gtab {
  height: 19px;
  border: 1px solid #d9d9d9;
  border-bottom: none;
  border-left: none;
  display: flex;
  align-items: center;
  padding-left: 5px;
  white-space: nowrap;
}

.gtab1 { width: 77px; border-left: 1px solid #d9d9d9; }
.gtab2 { width: 53px; }
.gtab3 { width: 60px; }
.gtab4 { width: 56px; }

.gtab_active {
  height: 21px;
  background: #fff;
  padding-bottom: 2px;
  padding-left: 7px;
}

.gpuz_tools {
  margin-left: auto;
  margin-right: 9px;
  align-self: flex-start;
  margin-top: 4px;
  display: flex;
  align-items: center;
  gap: 13px;
}

.tool_cam { width: 15px; height: 11px; }
.tool_ref { width: 13px; height: 13px; }
.tool_menu { width: 13px; height: 11px; }

.gpuz_panel {
  margin: 0 6px 0 4px;
  height: 533px;
  border: 1px solid #d9d9d9;
  padding: 7px 6px 0 7px;
  display: flex;
  flex-direction: column;
  gap: 8px;
  flex: none;
}

.sensor {
  display: flex;
  height: 19px;
  gap: 5px;
  flex: none;
}

.sensor_name,
.sensor_value,
.sensor_graph {
  border: 1px solid;
  border-color: #a2a2a2 #fff #fff #a2a2a2;
  background: #efefef;
  white-space: nowrap;
}

.sensor_name {
  width: 148px;
  display: flex;
  align-items: center;
  padding-left: 3px;
  position: relative;
}

.sensor_name i {
  position: absolute;
  right: 6px;
  top: 6px;
  border-left: 4px solid transparent;
  border-right: 4px solid transparent;
  border-top: 4px solid #222;
}

.sensor_value {
  width: 70px;
  text-align: right;
  padding-right: 3px;
  line-height: 17px;
}

.sensor_graph {
  width: 134px;
  display: flex;
  align-items: flex-end;
}

.sensor_graph b {
  display: block;
  width: 100%;
  background: #f00;
}

.sensor_svg {
  width: 100%;
  height: 100%;
  display: block;
}

.sensor_idle {
  background: #a8a8a8;
}

.gpuz_log {
  display: flex;
  align-items: center;
  margin-top: 15px;
  padding-right: 1px;
}

.log_check {
  margin: 0 3px 0 1px;
}

.gbtn {
  background: #e1e1e1;
  border: 1px solid #adadad;
  display: flex;
  align-items: center;
  justify-content: center;
}

.gbtn_reset {
  margin-left: auto;
  width: 46px;
  height: 19px;
}

.gpuz_bottom {
  display: flex;
  justify-content: space-between;
  margin: 6px 6px 0 4px;
}

.gpuz_select {
  width: 216px;
  height: 20px;
  background: #e1e1e1;
  border: 1px solid #adadad;
  display: flex;
  align-items: center;
  justify-content: space-between;
  padding: 0 5px 0 3px;
  white-space: nowrap;
}

.gpuz_select svg {
  width: 9px;
  height: 6px;
}

.gbtn_close {
  width: 73px;
  height: 20px;
}
```
